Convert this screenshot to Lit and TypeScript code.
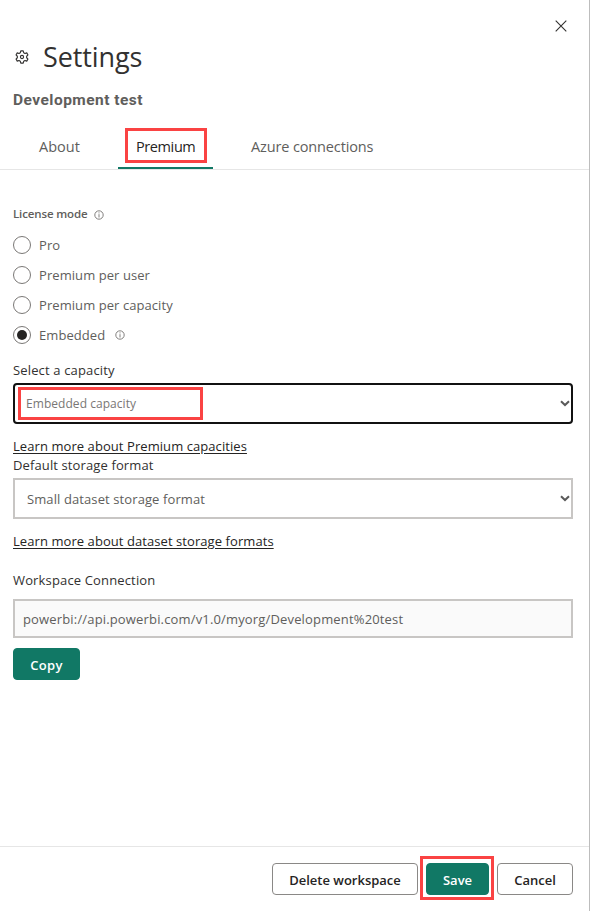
import { LitElement, html, svg, css } from "lit";
import { customElement, property, state } from "lit/decorators.js";
import { classMap } from "lit/directives/class-map.js";

const infoIcon = svg`<svg class="info" width="10" height="10" viewBox="0 0 10 10" fill="none" stroke="#757371" stroke-width="0.9">
  <circle cx="5" cy="5" r="4.2" /><path d="M5 4.2V7.5M5 2.4V3.4" /></svg>`;

const chevron = svg`<svg class="chevron" width="10" height="7" viewBox="0 0 10 7" fill="none" stroke="#5a5a5a" stroke-width="2">
  <path d="M1 1.2L5 5L9 1.2" /></svg>`;

@customElement("license-option")
export class LicenseOption extends LitElement {
  @property() label = "";
  @property({ type: Boolean }) checked = false;
  @property({ type: Boolean }) info = false;

  static styles = css`
    :host { display: flex; align-items: center; height: 30px; }
    .ring {
      box-sizing: border-box; width: 18px; height: 18px; margin-right: 8px;
      border: 1px solid #7a7876; border-radius: 50%;
      display: flex; align-items: center; justify-content: center;
    }
    .dot { width: 10px; height: 10px; border-radius: 50%; background: #252423; }
    .label { line-height: 20px; white-space: nowrap; }
    .info { margin-left: 10px; }
  `;

  render() {
    return html`
      <span class="ring">${this.checked ? html`<span class="dot"></span>` : null}</span>
      <span class="label">${this.label}</span>
      ${this.info ? infoIcon : null}
    `;
  }
}

@customElement("app-root")
export class AppRoot extends LitElement {
  @state() private mode = "Embedded";

  static styles = css`
    :host {
      box-sizing: border-box; display: flex; flex-direction: column;
      height: 911px; width: 590px; background: #fff; border-right: 1px solid #bdbdbd;
      font-family: "Open Sans", "Noto Sans", sans-serif; font-size: 13px; color: #323130;
      white-space: nowrap; overflow: hidden;
    }
    header { position: relative; display: flex; align-items: center; height: 34px; padding: 40px 0 0 15px; }
    .gear { margin-right: 14px; }
    h1 { margin: 0; font-size: 27px; line-height: 34px; font-weight: 400; color: #323130; letter-spacing: -0.1px; }
    .close { position: absolute; right: 22px; top: 20px; }
    h2 {
      margin: 15px 0 0 13px; font-family: Roboto, sans-serif; font-size: 15.5px; line-height: 22px;
      font-weight: 700; color: #605e5c; letter-spacing: 0.47px;
    }
    nav { display: flex; height: 46px; margin-top: 12px; border-bottom: 1px solid #e6e6e6; padding-left: 21px; font-size: 14.5px; }
    .tab { box-sizing: border-box; position: relative; height: 46px; padding: 0 18px; line-height: 47px; color: #605e5c; border-bottom: 2px solid transparent; }
    .tab.about { width: 77px; }
    .tab.premium { width: 95px; margin-left: 20px; letter-spacing: -0.4px; }
    .tab.azure { margin-left: 20px; letter-spacing: -0.13px; }
    .tab.active { color: #252423; border-bottom-color: #117865; }
    .mark { position: absolute; box-sizing: border-box; border: 3px solid #fa4343; pointer-events: none; }
    .tab .mark { left: 7px; top: 5px; width: 82px; height: 35px; }
    main { flex: 1; padding: 35px 16px 0 13px; display: flex; flex-direction: column; align-items: flex-start; letter-spacing: 0.07px; }
    .mode { display: flex; align-items: center; gap: 6px; height: 20px; line-height: 18px; font-size: 11.5px; letter-spacing: -0.13px; font-weight: 600; color: #605e5c; }
    .mode span { height: 20px; }
    .modes { margin-top: 5px; color: #605e5c; }
    .text { line-height: 20px; height: 20px; }
    .first { margin-top: 10px; letter-spacing: 0.15px; }
    .storage { margin-top: -1px; margin-bottom: 3px; letter-spacing: 0.12px; }
    .conn { margin-top: 19px; letter-spacing: 0.15px; }
    .select {
      box-sizing: border-box; position: relative; width: 560px; height: 41px; padding: 0 1px 0 12px;
      display: flex; align-items: center; justify-content: space-between;
      border: 2px solid #c8c6c4; color: #605e5c; letter-spacing: 0.1px;
    }
    .select.focus { border-color: #111; border-radius: 4px; padding-left: 11px; margin-top: 3px; }
    .value.small { font-size: 12px; color: #797775; letter-spacing: 0.05px; }
    .select .mark { left: 3px; top: 2px; width: 185px; height: 33px; }
    .link { line-height: 19px; height: 19px; text-decoration: underline; text-underline-offset: 2px; color: #252423; margin-top: 13px; }
    .input {
      box-sizing: border-box; width: 560px; height: 39px; line-height: 36px; padding-left: 8px;
      border: 2px solid #c8c6c4; background: #fafafa; color: #605e5c; margin-top: 9px; letter-spacing: 0.16px;
    }
    .btn {
      box-sizing: border-box; height: 32px; border: 1px solid #8a8886; border-radius: 4px; background: #fff;
      font: 600 13px/32px "Open Sans", "Noto Sans", sans-serif; color: #252423; padding: 0; text-align: center;
    }
    .primary { background: #117865; border-color: #117865; color: #fff; }
    .copy { width: 67px; margin-top: 10px; letter-spacing: 0.3px; }
    footer { box-sizing: border-box; display: flex; height: 65px; border-top: 1px solid #e6e6e6; padding: 16px 16px 0 0; justify-content: flex-end; }
    .delete { width: 146px; }
    .savewrap { position: relative; margin: 0 8px; }
    .save { width: 63px; }
    .savewrap .mark { left: -6px; top: -7px; width: 74px; height: 44px; }
    .cancel { width: 76px; }
  `;

  render() {
    const modes = ["Pro", "Premium per user", "Premium per capacity", "Embedded"];
    const tabs = [
      { id: "about", label: "About" },
      { id: "premium", label: "Premium" },
      { id: "azure", label: "Azure connections" },
    ];
    return html`
      <header>
        <svg class="gear" width="14" height="14" viewBox="0 0 15 15" fill="none" stroke="#323130" stroke-width="1.2" stroke-linejoin="round">
          <path d="M6.2 1H8.8L9.3 2.9L10.7 3.7L12.6 3.1L13.9 5.3L12.5 6.7V8.3L13.9 9.7L12.6 11.9L10.7 11.3L9.3 12.1L8.8 14H6.2L5.7 12.1L4.3 11.3L2.4 11.9L1.1 9.7L2.5 8.3V6.7L1.1 5.3L2.4 3.1L4.3 3.7L5.7 2.9Z" />
          <circle cx="7.5" cy="7.5" r="1.7" />
        </svg>
        <h1><span>Settings</span></h1>
        <svg class="close" width="12" height="12" viewBox="0 0 12 12" stroke="#323130" stroke-width="1.1">
          <path d="M0.7 0.7L11.3 11.3M11.3 0.7L0.7 11.3" />
        </svg>
      </header>
      <h2>Development test</h2>
      <nav>
        ${tabs.map(
          (t) => html`<div class=${classMap({ tab: true, [t.id]: true, active: t.id === "premium" })}>
            <span>${t.label}</span>${t.id === "premium" ? html`<i class="mark"></i>` : null}
          </div>`
        )}
      </nav>
      <main>
        <div class="mode"><span>License mode</span>${infoIcon}</div>
        <div class="modes">
          ${modes.map(
            (m) => html`<license-option .label=${m} .checked=${m === this.mode} .info=${m === "Embedded"}
              @click=${() => (this.mode = m)}></license-option>`
          )}
        </div>
        <div class="text first">Select a capacity</div>
        <div class="select focus"><span class="value small">Embedded capacity</span>${chevron}<i class="mark"></i></div>
        <div class="link">Learn more about Premium capacities</div>
        <div class="text storage">Default storage format</div>
        <div class="select"><span class="value">Small dataset storage format</span>${chevron}</div>
        <div class="link">Learn more about dataset storage formats</div>
        <div class="text conn">Workspace Connection</div>
        <div class="input">powerbi://api.powerbi.com/v1.0/myorg/Development%20test</div>
        <button class="btn primary copy">Copy</button>
      </main>
      <footer>
        <button class="btn delete">Delete workspace</button>
        <div class="savewrap"><button class="btn primary save">Save</button><i class="mark"></i></div>
        <button class="btn cancel">Cancel</button>
      </footer>
    `;
  }
}
